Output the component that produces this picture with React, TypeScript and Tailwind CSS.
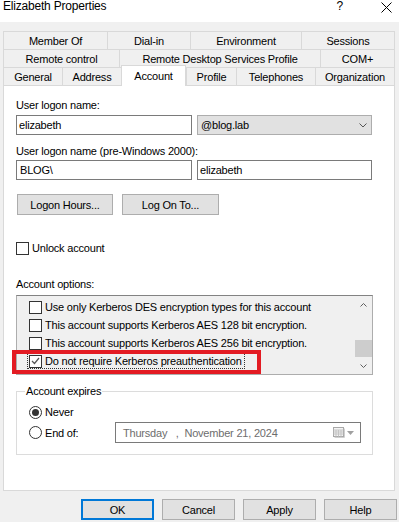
import React from "react";

function CheckBox({ checked = false }: { checked?: boolean }) {
  return (
    <div className="w-[13px] h-[13px] border border-[#333333] bg-white flex items-center justify-center shrink-0">
      {checked && (
        <svg width="9" height="8" viewBox="0 0 9 8">
          <path d="M1 4 L3.5 6.5 L8 1" stroke="#555" strokeWidth="1.2" fill="none" />
        </svg>
      )}
    </div>
  );
}

function Radio({ checked = false }: { checked?: boolean }) {
  return (
    <div className="w-[13px] h-[13px] rounded-full border border-[#333333] bg-white flex items-center justify-center shrink-0">
      {checked && <div className="w-[7px] h-[7px] rounded-full bg-[#333333]" />}
    </div>
  );
}

function Tab({ w, label, last = false }: { w: string; label: string; last?: boolean }) {
  return (
    <div
      className={`${w} h-[18px] border-t border-l ${last ? "border-r" : ""} border-[#d9d9d9] bg-[#f0f0f0] flex items-center justify-center whitespace-nowrap`}
    >
      {label}
    </div>
  );
}

function Btn({ children, w, primary = false }: { children: React.ReactNode; w: string; primary?: boolean }) {
  return (
    <div
      className={`${w} h-[21px] bg-[#e1e1e1] flex items-center justify-center ${
        primary ? "border-2 border-[#0078d7]" : "border border-[#adadad]"
      }`}
    >
      {children}
    </div>
  );
}

export default function App() {
  return (
    <div className="relative w-[399px] h-[522px] bg-[#f0f0f0] overflow-hidden text-[11px] leading-[14px] tracking-[-0.2px] text-black font-['Liberation_Sans',Arial,sans-serif]">
      {/* title bar */}
      <div className="h-[22px] bg-white flex items-start">
        <span className="ml-[3px] -mt-[1px] text-[12px] leading-[14px]">Elizabeth Properties</span>
        <span className="ml-[230px] -mt-[1px] text-[12px] leading-[14px]">?</span>
        <svg className="ml-[38px] mt-[2px]" width="11" height="11" viewBox="0 0 11 11">
          <path d="M0.5 0.5 L10.5 10.5 M10.5 0.5 L0.5 10.5" stroke="#000" strokeWidth="1" />
        </svg>
      </div>

      {/* tabs */}
      <div className="mt-[9px] ml-[3px] w-[392px]">
        <div className="flex">
          <Tab w="w-[104px]" label="Member Of" />
          <Tab w="w-[83px]" label="Dial-in" />
          <Tab w="w-[111px]" label="Environment" />
          <Tab w="w-[94px]" label="Sessions" last />
        </div>
        <div className="flex">
          <Tab w="w-[116px]" label="Remote control" />
          <Tab w="w-[201px]" label="Remote Desktop Services Profile" />
          <Tab w="w-[75px]" label="COM+" last />
        </div>
        <div className="relative z-10 flex h-[18px] items-start">
          <Tab w="w-[59px]" label="General" />
          <Tab w="w-[59px]" label="Address" />
          <div className="w-[65px] h-[21px] -mt-[2px] border-t border-l border-r border-[#d9d9d9] bg-white flex items-center justify-center">
            Account
          </div>
          <Tab w="w-[50px]" label="Profile" />
          <Tab w="w-[79px]" label="Telephones" />
          <Tab w="w-[80px]" label="Organization" last />
        </div>
      </div>

      {/* panel */}
      <div className="ml-[3px] w-[392px] h-[406px] border border-[#d9d9d9] bg-white pl-[12px] pt-[12px]">
        <div>User logon name:</div>
        <div className="mt-[3px] flex gap-[5px]">
          <div className="w-[176px] h-[20px] border border-[#7a7a7a] bg-white flex items-center pl-[2px]">elizabeth</div>
          <div className="w-[175px] h-[20px] border border-[#adadad] bg-[#e1e1e1] flex items-center justify-between pl-[3px] pr-[4px]">
            <span>@blog.lab</span>
            <svg width="8" height="5" viewBox="0 0 8 5">
              <path d="M0.5 0.5 L4 4 L7.5 0.5" stroke="#555" strokeWidth="1" fill="none" />
            </svg>
          </div>
        </div>
        <div className="mt-[9px]">User logon name (pre-Windows 2000):</div>
        <div className="mt-[2px] flex gap-[5px]">
          <div className="w-[176px] h-[20px] border border-[#7a7a7a] bg-white flex items-center pl-[3px]">BLOG\</div>
          <div className="w-[175px] h-[20px] border border-[#7a7a7a] bg-white flex items-center pl-[2px]">elizabeth</div>
        </div>
        <div className="mt-[14px] ml-[1px] flex gap-[9px]">
          <Btn w="w-[96px]">Logon Hours...</Btn>
          <Btn w="w-[97px]">Log On To...</Btn>
        </div>
        <div className="mt-[26px] h-[14px] flex items-center gap-[3px]">
          <CheckBox />
          <span>Unlock account</span>
        </div>
        <div className="mt-[22px]">Account options:</div>
        <div className="mt-[4px] w-[357px] h-[80px] border border-[#adadad] border-t-[#828282] bg-[#f0f0f0] flex">
          <div className="flex-1 pl-[12px] pt-[2px]">
            <div className="h-[18px] flex items-center gap-[3px]">
              <CheckBox />
              <span>Use only Kerberos DES encryption types for this account</span>
            </div>
            <div className="h-[18px] flex items-center gap-[3px]">
              <CheckBox />
              <span>This account supports Kerberos AES 128 bit encryption.</span>
            </div>
            <div className="h-[18px] flex items-center gap-[3px]">
              <CheckBox />
              <span>This account supports Kerberos AES 256 bit encryption.</span>
            </div>
            <div className="h-[18px] flex items-center">
              <div className="-ml-[2px] flex items-center gap-[3px] border border-dotted border-[#333] pl-[1px] pr-[2px] h-[16px]">
                <CheckBox checked />
                <span>Do not require Kerberos preauthentication</span>
              </div>
            </div>
          </div>
          <div className="w-[17px] flex flex-col bg-[#f0f0f0]">
            <div className="h-[17px] flex items-center justify-center">
              <svg width="7" height="4" viewBox="0 0 7 4">
                <path d="M0.5 3.5 L3.5 0.5 L6.5 3.5" stroke="#606060" strokeWidth="1" fill="none" />
              </svg>
            </div>
            <div className="flex-1 flex flex-col justify-end">
              <div className="h-[17px] bg-[#cdcdcd]" />
            </div>
            <div className="h-[17px] flex items-center justify-center">
              <svg width="7" height="4" viewBox="0 0 7 4">
                <path d="M0.5 0.5 L3.5 3.5 L6.5 0.5" stroke="#606060" strokeWidth="1" fill="none" />
              </svg>
            </div>
          </div>
        </div>

        {/* account expires group */}
        <div className="relative mt-[16px] w-[357px] border border-[#dcdcdc] pl-[12px] pt-[13px] pb-[11px]">
          <span className="absolute -top-[8px] left-[8px] bg-white px-[1px]">Account expires</span>
          <div className="h-[14px] flex items-center gap-[3px]">
            <Radio checked />
            <span>Never</span>
          </div>
          <div className="mt-[3px] h-[21px] flex items-center">
            <div className="w-[86px] flex items-center gap-[3px]">
              <Radio />
              <span>End of:</span>
            </div>
            <div className="w-[246px] h-[21px] border border-[#7a7a7a] bg-white flex items-center justify-between pl-[7px] pr-[6px] text-[#6d6d6d]">
              <span className="whitespace-pre">Thursday   ,  November 21, 2024</span>
              <div className="flex items-center gap-[2px]">
                <svg width="12" height="11" viewBox="0 0 12 11">
                  <rect x="0.5" y="0.5" width="10" height="9" fill="#f4f4f4" stroke="#a8a8a8" />
                  <path d="M0.5 3 H10.5 M0.5 5 H10.5 M0.5 7 H10.5 M3 3 V9.5 M5.5 3 V9.5 M8 3 V9.5" stroke="#c4c4c4" strokeWidth="1" />
                  <path d="M1.5 10.5 H11.5 V1.5" stroke="#d0d0d0" strokeWidth="1" fill="none" />
                </svg>
                <svg width="7" height="4" viewBox="0 0 7 4">
                  <path d="M0 0 H7 L3.5 4 Z" fill="#a0a0a0" />
                </svg>
              </div>
            </div>
          </div>
        </div>
      </div>

      {/* bottom buttons */}
      <div className="mt-[8px] pl-[81px] flex gap-[8px]">
        <Btn w="w-[73px]" primary>OK</Btn>
        <Btn w="w-[73px]">Cancel</Btn>
        <Btn w="w-[73px]">Apply</Btn>
        <Btn w="w-[73px]">Help</Btn>
      </div>

      {/* red annotation */}
      <div className="absolute left-[12px] top-[350px] w-[249px] h-[24px] border-4 border-[#e31b23]" />
    </div>
  );
}
